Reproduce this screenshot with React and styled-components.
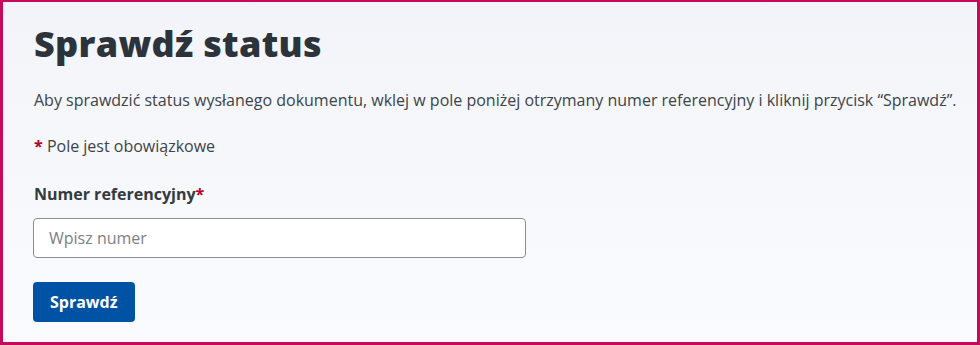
import styled, { createGlobalStyle } from "styled-components";

const GlobalStyle = createGlobalStyle`
  html, body {
    margin: 0;
    padding: 0;
  }
  body {
    font-family: "Open Sans", "Liberation Sans", sans-serif;
    color: #343a40;
  }
`;

export default function App() {
  return (
    <>
      <GlobalStyle />
      <Frame>
        <Panel>
          <Title>Sprawdź status</Title>
          <Lead>
            Aby sprawdzić status wysłanego dokumentu, wklej w pole poniżej
            otrzymany numer referencyjny i kliknij przycisk “Sprawdź”.
          </Lead>
          <Note>
            <Star>*</Star> Pole jest obowiązkowe
          </Note>
          <Field>
            <Label htmlFor="ref">
              Numer referencyjny<Star>*</Star>
            </Label>
            <Input id="ref" type="text" placeholder="Wpisz numer" />
          </Field>
          <Button type="button">Sprawdź</Button>
        </Panel>
      </Frame>
    </>
  );
}

const Frame = styled.div`
  width: 980px;
  height: 345px;
  box-sizing: border-box;
  border: 3px solid #c8085a;
  border-top-width: 2px;
  background: #fff;
`;

const Panel = styled.section`
  height: 100%;
  box-sizing: border-box;
  padding: 20px 0 0 30px;
  margin-right: 1px;
  margin-bottom: 1px;
  background: linear-gradient(#f2f4f9, #fafbfd);
  display: flex;
  flex-direction: column;
  align-items: flex-start;
`;

const Title = styled.h1`
  margin: 0;
  padding-left: 1px;
  font-family: "Open Sans", sans-serif;
  font-weight: 800;
  font-size: 36px;
  line-height: 44px;
  color: #2d333b;
  letter-spacing: 0.3px;
`;

const Lead = styled.p`
  margin: 22px 0 0 1px;
  font-size: 16px;
  line-height: 24px;
  color: #3d434a;
`;

const Note = styled.p`
  margin: 22px 0 0 1px;
  font-size: 16px;
  line-height: 24px;
  color: #3d434a;
`;

const Star = styled.span`
  color: #b3002d;
  font-weight: 700;
`;

const Field = styled.div`
  margin-top: 24px;
  display: flex;
  flex-direction: column;
  gap: 12px;
`;

const Label = styled.label`
  margin-left: 1px;
  font-size: 16px;
  line-height: 24px;
  font-weight: 700;
  color: #343a40;
`;

const Input = styled.input`
  width: 493px;
  height: 40px;
  box-sizing: border-box;
  border: 1px solid #8a8d91;
  border-radius: 4px;
  background: #fff;
  padding: 0 15px;
  font-family: "Open Sans", sans-serif;
  font-size: 16px;
  color: #343a40;

  &::placeholder {
    color: #7b8087;
  }
`;

const Button = styled.button`
  margin-top: 24px;
  height: 40px;
  padding: 0 17px;
  border: none;
  border-radius: 4px;
  background: #0052a5;
  color: #fff;
  font-family: "Open Sans", sans-serif;
  font-weight: 700;
  font-size: 16px;
`;
